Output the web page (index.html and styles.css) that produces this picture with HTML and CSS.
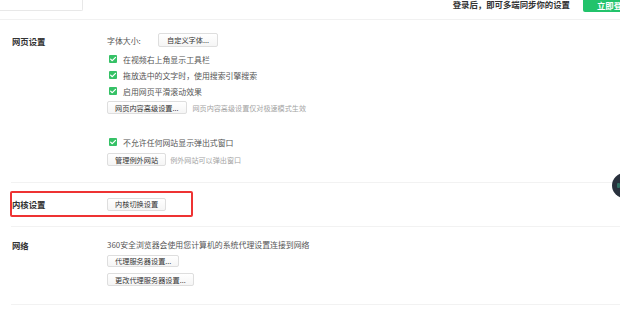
FILE: index.html
```html
<!DOCTYPE html>
<html lang="zh-CN">
<head>
<meta charset="utf-8">
<title>设置</title>
<link rel="stylesheet" href="styles.css">
</head>
<body>
<div class="page">
  <header class="topbar">
    <div class="search"></div>
    <div class="sync">
      <span class="sync-text">登录后，即可多端同步你的设置</span>
      <span class="login-btn">立即登录</span>
    </div>
  </header>

  <section class="section s-web">
    <div class="label">网页设置</div>
    <div class="content">
      <div class="row row-font">
        <span class="font-label">字体大小:</span>
        <span class="btn btn-tall">自定义字体...</span>
      </div>
      <div class="check"><span class="box"><svg viewBox="0 0 8 8"><path d="M1.6 4.1 L3.3 5.7 L6.5 2.4" /></svg></span>在视频右上角显示工具栏</div>
      <div class="check"><span class="box"><svg viewBox="0 0 8 8"><path d="M1.6 4.1 L3.3 5.7 L6.5 2.4" /></svg></span>拖放选中的文字时，使用搜索引擎搜索</div>
      <div class="check"><span class="box"><svg viewBox="0 0 8 8"><path d="M1.6 4.1 L3.3 5.7 L6.5 2.4" /></svg></span>启用网页平滑滚动效果</div>
      <div class="row row-adv">
        <span class="btn">网页内容高级设置...</span>
        <span class="hint">网页内容高级设置仅对极速模式生效</span>
      </div>
      <div class="check check-popup"><span class="box"><svg viewBox="0 0 8 8"><path d="M1.6 4.1 L3.3 5.7 L6.5 2.4" /></svg></span>不允许任何网站显示弹出式窗口</div>
      <div class="row row-except">
        <span class="btn">管理例外网站</span>
        <span class="hint hint-near">例外网站可以弹出窗口</span>
      </div>
    </div>
  </section>

  <section class="section s-kernel">
    <div class="highlight">
      <div class="label label-k">内核设置</div>
      <span class="btn">内核切换设置</span>
    </div>
  </section>

  <section class="section s-net">
    <div class="label">网络</div>
    <div class="content">
      <div class="net-text">360安全浏览器会使用您计算机的系统代理设置连接到网络</div>
      <div class="row row-proxy"><span class="btn">代理服务器设置...</span></div>
      <div class="row row-proxy2"><span class="btn">更改代理服务器设置...</span></div>
    </div>
  </section>

  <div class="float-ball"><span class="ball-dot"></span></div>
</div>
</body>
</html>
```

FILE: styles.css
```css
html, body {
  margin: 0;
  padding: 0;
  background: #ffffff;
}

body {
  width: 620px;
  height: 309px;
  overflow: hidden;
  font-family: "Noto Sans CJK SC", "Noto Sans", sans-serif;
  color: #555;
}

.page {
  position: relative;
  width: 620px;
  height: 309px;
  overflow: hidden;
}

/* top bar */
.topbar {
  height: 19px;
  border-bottom: 1px solid #f1f1f1;
  display: flex;
  justify-content: space-between;
  align-items: flex-start;
}

.search {
  width: 92px;
  height: 10px;
  margin-left: -11px;
  border: 1px solid #e8e8e8;
  border-top: none;
  border-radius: 0 0 2px 2px;
}

.sync {
  display: flex;
  align-items: flex-start;
  margin-right: -26px;
}

.sync-text {
  font-size: 8.4px;
  line-height: 9px;
  font-weight: 700;
  color: #333;
  margin-top: 0;
  margin-right: 13px;
}

.login-btn {
  width: 63px;
  height: 12px;
  background: #22c36b;
  color: #fff;
  font-size: 8.4px;
  font-weight: 700;
  line-height: 11px;
  padding-left: 14px;
  box-sizing: border-box;
  border-radius: 0 0 2px 2px;
}

/* sections */
.section {
  margin-left: 11px;
  display: flex;
  border-bottom: 1px solid #f2f2f2;
}

.label {
  width: 95px;
  padding-left: 1px;
  flex: none;
  font-size: 8.4px;
  font-weight: 700;
  color: #333;
  line-height: 14px;
}

.content {
  display: flex;
  flex-direction: column;
  align-items: flex-start;
}

.s-web {
  padding-top: 13px;
  padding-bottom: 16px;
}

.s-web .label {
  margin-top: 1px;
}

.row {
  display: flex;
  align-items: center;
}

.row-font {
  height: 14px;
}

.font-label {
  width: 51px;
  font-size: 7.9px;
  color: #555;
}

.btn {
  display: inline-flex;
  align-items: center;
  justify-content: center;
  height: 13px;
  padding: 0 7px;
  box-sizing: border-box;
  border: 1px solid #dedede;
  border-radius: 2px;
  background: linear-gradient(#ffffff, #f5f5f5);
  font-size: 7.2px;
  color: #333;
  white-space: nowrap;
}

.btn-tall {
  height: 14px;
  padding: 0 8px;
}

.check {
  display: flex;
  align-items: center;
  height: 16px;
  font-size: 7.9px;
  color: #555;
  white-space: nowrap;
}

.row-font + .check {
  margin-top: 4px;
}

.box {
  width: 8px;
  height: 8px;
  margin-left: 2px;
  margin-right: 6px;
  background: #35c166;
  border-radius: 1px;
  display: inline-flex;
}

.box svg {
  width: 8px;
  height: 8px;
}

.box path {
  fill: none;
  stroke: #ffffff;
  stroke-width: 1.2;
  stroke-linecap: round;
  stroke-linejoin: round;
}

.row-adv {
  margin-top: 2px;
}

.hint {
  margin-left: 6px;
  font-size: 7.1px;
  color: #a3a3a3;
  white-space: nowrap;
}

.hint-near {
  margin-left: 4px;
}

.check-popup {
  margin-top: 20px;
}

.row-except {
  margin-top: 3px;
}

/* kernel section */
.s-kernel {
  padding-top: 8px;
  padding-bottom: 9px;
}

.highlight {
  margin-left: -1px;
  width: 183px;
  height: 26px;
  box-sizing: border-box;
  border: 2px solid #ee3333;
  border-radius: 2px;
  display: flex;
  align-items: center;
}

.label-k {
  width: 95px;
  padding-left: 0;
}

/* network */
.s-net {
  padding-top: 12px;
  padding-bottom: 18px;
}

.s-net .label {
  line-height: 12px;
}

.net-text {
  height: 12px;
  line-height: 12px;
  font-size: 7.9px;
  color: #555;
  white-space: nowrap;
}

.row-proxy {
  margin-top: 4px;
}

.row-proxy .btn {
  height: 12px;
}

.row-proxy2 {
  margin-top: 6px;
}

/* floating ball overlay */
.float-ball {
  position: absolute;
  left: 612px;
  top: 173px;
  width: 25px;
  height: 25px;
  border-radius: 50%;
  background: #29313d;
}

.ball-dot {
  position: absolute;
  left: 5px;
  top: 10px;
  width: 3px;
  height: 5px;
  border-radius: 1px;
  background: #2f6f63;
}
```
